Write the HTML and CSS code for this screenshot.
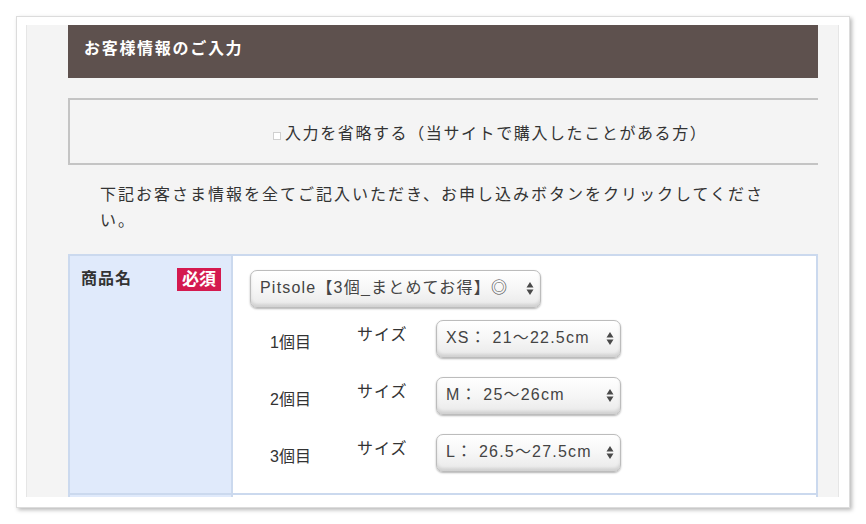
FILE: index.html
```html
<!DOCTYPE html>
<html lang="ja">
<head>
<meta charset="utf-8">
<title>お客様情報のご入力</title>
<link rel="stylesheet" href="styles.css">
</head>
<body>
<div class="card">
  <div class="panel">
    <h2 class="heading">お客様情報のご入力</h2>
    <div class="skip-box">
      <label class="skip"><span class="check"></span>入力を省略する（当サイトで購入したことがある方）</label>
    </div>
    <p class="lead">下記お客さま情報を全てご記入いただき、お申し込みボタンをクリックしてください。</p>
    <div class="form-table">
      <div class="th">
        <span class="th-label">商品名</span>
        <span class="req">必須</span>
      </div>
      <div class="td">
        <div class="sel sel-product">
          <select><option>Pitsole【3個_まとめてお得】◎</option></select>
          <svg class="arrows" width="8" height="15" viewBox="0 0 8 15"><path d="M4 1 L7.5 6.5 H0.5 Z M4 14 L7.5 8.5 H0.5 Z" fill="#4a4a4a"/></svg>
        </div>
        <div class="size-row">
          <span class="num">1個目</span>
          <span class="size-label">サイズ</span>
          <div class="sel sel-size">
            <select><option>XS： 21〜22.5cm</option></select>
            <svg class="arrows" width="8" height="15" viewBox="0 0 8 15"><path d="M4 1 L7.5 6.5 H0.5 Z M4 14 L7.5 8.5 H0.5 Z" fill="#4a4a4a"/></svg>
          </div>
        </div>
        <div class="size-row">
          <span class="num">2個目</span>
          <span class="size-label">サイズ</span>
          <div class="sel sel-size">
            <select><option>M： 25〜26cm</option></select>
            <svg class="arrows" width="8" height="15" viewBox="0 0 8 15"><path d="M4 1 L7.5 6.5 H0.5 Z M4 14 L7.5 8.5 H0.5 Z" fill="#4a4a4a"/></svg>
          </div>
        </div>
        <div class="size-row">
          <span class="num">3個目</span>
          <span class="size-label">サイズ</span>
          <div class="sel sel-size">
            <select><option>L： 26.5〜27.5cm</option></select>
            <svg class="arrows" width="8" height="15" viewBox="0 0 8 15"><path d="M4 1 L7.5 6.5 H0.5 Z M4 14 L7.5 8.5 H0.5 Z" fill="#4a4a4a"/></svg>
          </div>
        </div>
      </div>
      <div class="th th-next"></div>
      <div class="td td-next"></div>
    </div>
  </div>
</div>
</body>
</html>
```

FILE: styles.css
```css
* { box-sizing: border-box; }

html, body {
  margin: 0;
  padding: 0;
  background: #ffffff;
}

body {
  font-family: "Liberation Sans", "Noto Sans CJK JP", sans-serif;
  color: #333333;
  width: 866px;
  height: 524px;
  overflow: hidden;
}

.card {
  margin: 16px 0 0 16px;
  width: 834px;
  height: 492px;
  background: #ffffff;
  border: 1px solid #dcdcdc;
  box-shadow: 2px 2px 4px rgba(0, 0, 0, 0.28);
  padding: 8px 10px 10px 9px;
}

.panel {
  height: 472px;
  background: #f4f4f4;
  border: 1px solid #e6e6e6;
  border-bottom: none;
  border-top: none;
  padding: 0 20px 0 41px;
  overflow: hidden;
}

.heading {
  margin: 0;
  height: 53px;
  background: #5e514e;
  color: #ffffff;
  font-size: 16px;
  font-weight: bold;
  letter-spacing: 1.7px;
  line-height: 48px;
  padding-left: 16px;
}

.skip-box {
  margin-top: 20px;
  height: 67px;
  border: 2px solid #c4c4c4;
  border-right: none;
  display: flex;
  align-items: center;
  padding-left: 203px;
}

.skip {
  font-size: 16px;
  letter-spacing: 1.6px;
  color: #333333;
  display: flex;
  align-items: center;
}

.check {
  display: inline-block;
  width: 8px;
  height: 8px;
  border: 1px solid #d0d0d0;
  background: #ffffff;
  margin: 8px 4px 0 0;
}

.lead {
  margin: 17px 0 0 0;
  padding-left: 32px;
  width: 714px;
  font-size: 16px;
  letter-spacing: 2px;
  line-height: 26px;
  color: #333333;
}

.form-table {
  margin-top: 20px;
  display: grid;
  grid-template-columns: 165px 585px;
  border-top: 2px solid #cbd9ee;
}

.th {
  background: #e0eafb;
  border-left: 2px solid #cbd9ee;
  border-right: 2px solid #cbd9ee;
  border-bottom: 2px solid #cbd9ee;
  padding: 12px 10px 0 11px;
  display: flex;
  align-items: flex-start;
  justify-content: space-between;
}

.th-label {
  font-size: 16px;
  font-weight: bold;
  letter-spacing: 1px;
  line-height: 22px;
  color: #333333;
}

.req {
  background: #d41a4f;
  color: #ffffff;
  font-size: 17px;
  font-weight: bold;
  line-height: 23px;
  height: 23px;
  padding: 0 5px;
  letter-spacing: 0;
}

.td {
  background: #ffffff;
  border-right: 2px solid #cbd9ee;
  border-bottom: 2px solid #cbd9ee;
  padding: 14px 0 21px 17px;
  display: flex;
  flex-direction: column;
  gap: 19px;
}

.td .sel-product + .size-row {
  margin-top: -7px;
}

.th-next {
  height: 12px;
  border-bottom: none;
}

.td-next {
  height: 12px;
  border-bottom: none;
}

.sel {
  position: relative;
  height: 38px;
}

.sel select {
  appearance: none;
  -webkit-appearance: none;
  width: 100%;
  height: 38px;
  border: 1px solid #bcbcbc;
  border-radius: 7px;
  background: linear-gradient(#ffffff 0%, #f6f6f6 50%, #e9e9e9 100%);
  box-shadow: inset 0 -3px 3px rgba(0, 0, 0, 0.10), 0 1px 2px rgba(0, 0, 0, 0.30);
  font-family: "Liberation Sans", "Noto Sans CJK JP", sans-serif;
  font-size: 16px;
  letter-spacing: 1.2px;
  color: #444444;
  padding: 0 0 4px 9px;
  outline: none;
}

.arrows {
  position: absolute;
  right: 7px;
  top: 11px;
}

.sel-product {
  width: 291px;
}

.sel-size {
  width: 185px;
}

.size-row {
  display: flex;
  align-items: center;
  margin-left: 20px;
}

.num {
  width: 87px;
  font-size: 16px;
  padding-top: 3px;
  color: #333333;
}

.size-label {
  width: 79px;
  font-size: 16px;
  letter-spacing: 1px;
  padding-bottom: 12px;
  color: #333333;
}
```
